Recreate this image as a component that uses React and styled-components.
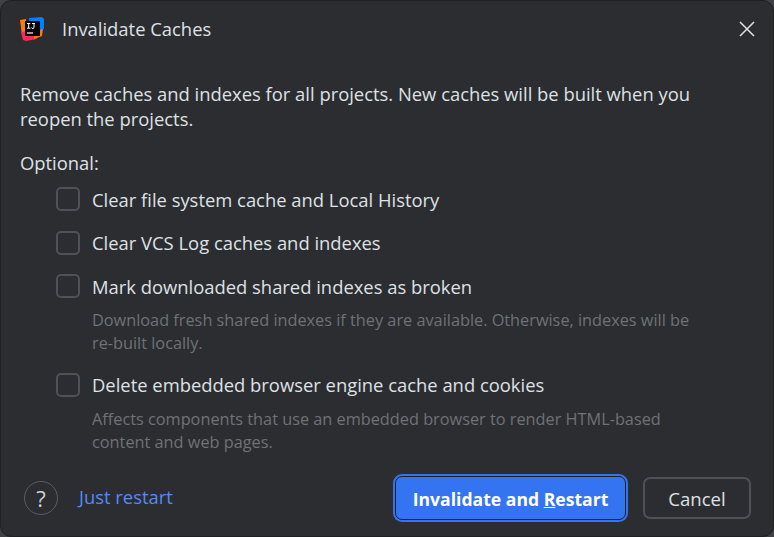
import React from "react";
import styled, { createGlobalStyle } from "styled-components";

const GlobalStyle = createGlobalStyle`
  html, body {
    margin: 0;
    padding: 0;
    background: #3f4144;
  }
`;

const options = [
  { label: "Clear file system cache and Local History" },
  { label: "Clear VCS Log caches and indexes" },
  {
    label: "Mark downloaded shared indexes as broken",
    hint: ["Download fresh shared indexes if they are available. Otherwise, indexes will be", "re-built locally."],
  },
  {
    label: "Delete embedded browser engine cache and cookies",
    hint: ["Affects components that use an embedded browser to render HTML-based", "content and web pages."],
  },
];

const App = () => {
  return (
    <>
      <GlobalStyle />
      <Dialog>
        <TitleBar>
          <Logo />
          <Title>Invalidate Caches</Title>
          <CloseIcon />
        </TitleBar>
        <Body>
          <Intro>
            Remove caches and indexes for all projects. New caches will be built when you
            <br />
            reopen the projects.
          </Intro>
          <Optional>Optional:</Optional>
          <OptionList>
            {options.map((o) => (
              <Option key={o.label}>
                <OptionRow>
                  <Box />
                  <span>{o.label}</span>
                </OptionRow>
                {o.hint && (
                  <Hint>
                    {o.hint[0]}
                    <br />
                    {o.hint[1]}
                  </Hint>
                )}
              </Option>
            ))}
          </OptionList>
        </Body>
        <Footer>
          <Help>?</Help>
          <RestartLink>Just restart</RestartLink>
          <Spacer />
          <PrimaryButton>
            Invalidate and <u>R</u>estart
          </PrimaryButton>
          <CancelButton>Cancel</CancelButton>
        </Footer>
      </Dialog>
    </>
  );
};

export default App;

const Logo = () => (
  <LogoSvg viewBox="0 0 24 24" width="24" height="24">
    <path d="M0 3 L6 2 L6 18 L2 18 Z" fill="#f97a12" />
    <path d="M1 15 L10 14 L17 22 L6 24 L3 23 Z" fill="#fe2857" />
    <path d="M9 1 L22 0 L24 2 L24 12 L18 12 L9 3 Z" fill="#087cfa" />
    <path d="M14 18 L21 12 L23 12 L22 19 L14 22 Z" fill="#f97a12" />
    <rect x="5" y="4" width="15" height="15" fill="#000" />
    <path d="M7 6.5 h3.4 M8.7 6.5 v4.5 M7 11.2 h3.4 M12 6.5 h3 M14 6.5 v3.6 a1.2 1.2 0 0 1 -2.4 0.4" stroke="#fff" strokeWidth="1" fill="none" />
    <rect x="7" y="15.4" width="6" height="1.2" fill="#fff" />
  </LogoSvg>
);

const CloseIcon = () => (
  <CloseSvg viewBox="0 0 16 16" width="16" height="16">
    <path d="M1 1 L15 15 M15 1 L1 15" stroke="#dfe1e5" strokeWidth="1.5" fill="none" />
  </CloseSvg>
);

const Dialog = styled.div`
  box-sizing: border-box;
  width: 774px;
  height: 537px;
  display: flex;
  flex-direction: column;
  background: #2b2d30;
  border-radius: 11px;
  border: 1px solid #1f2022;
  font-family: "Open Sans", "Liberation Sans", sans-serif;
  color: #dfe1e5;
  overflow: hidden;
`;

const TitleBar = styled.div`
  display: flex;
  align-items: center;
  height: 56px;
  padding: 0 18px 0 19px;
  flex-shrink: 0;
`;

const LogoSvg = styled.svg`
  flex-shrink: 0;
`;

const Title = styled.div`
  margin: 0 0 2px 18px;
  flex: 1;
  font-size: 18.4px;
`;

const CloseSvg = styled.svg`
  flex-shrink: 0;
`;

const Body = styled.div`
  flex: 1;
  min-height: 0;
  padding: 24px 19px 0;
`;

const Intro = styled.div`
  font-size: 18.4px;
  line-height: 25px;
  white-space: nowrap;
`;

const Optional = styled.div`
  font-size: 18.4px;
  line-height: 28px;
  margin-top: 18px;
`;

const OptionList = styled.div`
  display: flex;
  flex-direction: column;
  gap: 15.5px;
  margin-top: 8px;
  padding-left: 36px;
`;

const Option = styled.div`
  display: flex;
  flex-direction: column;
`;

const OptionRow = styled.div`
  display: flex;
  align-items: center;
  gap: 12px;
  height: 28px;
  font-size: 18.4px;
`;

const Box = styled.div`
  box-sizing: border-box;
  width: 24px;
  height: 24px;
  border: 2px solid #4e5157;
  border-radius: 5px;
  flex-shrink: 0;
`;

const Hint = styled.div`
  margin: 9px 0 0 36px;
  font-size: 16.3px;
  line-height: 23px;
  color: #6f7277;
  white-space: nowrap;
`;

const Footer = styled.div`
  display: flex;
  align-items: center;
  height: 76px;
  padding: 0 22px 0 23px;
  flex-shrink: 0;
`;

const Help = styled.div`
  box-sizing: border-box;
  width: 34px;
  height: 34px;
  border: 1px solid #5a5d63;
  border-radius: 50%;
  display: flex;
  align-items: center;
  justify-content: center;
  font-size: 22px;
  color: #ced0d6;
`;

const RestartLink = styled.div`
  margin: 0 0 3px 21px;
  font-size: 18.4px;
  color: #548af7;
`;

const Spacer = styled.div`
  flex: 1;
`;

const PrimaryButton = styled.div`
  box-sizing: border-box;
  width: 231px;
  height: 44px;
  padding-top: 1px;
  display: flex;
  align-items: center;
  justify-content: center;
  white-space: pre;
  background: #3574f0;
  border: 1px solid #1f2022;
  border-radius: 7px;
  box-shadow: 0 0 0 2px #3574f0;
  color: #fff;
  font-size: 17.6px;
  font-weight: 700;
`;

const CancelButton = styled.div`
  box-sizing: border-box;
  width: 108px;
  height: 42px;
  margin-left: 17px;
  display: flex;
  align-items: center;
  justify-content: center;
  border: 2px solid #4e5157;
  border-radius: 7px;
  font-size: 18.6px;
`;
